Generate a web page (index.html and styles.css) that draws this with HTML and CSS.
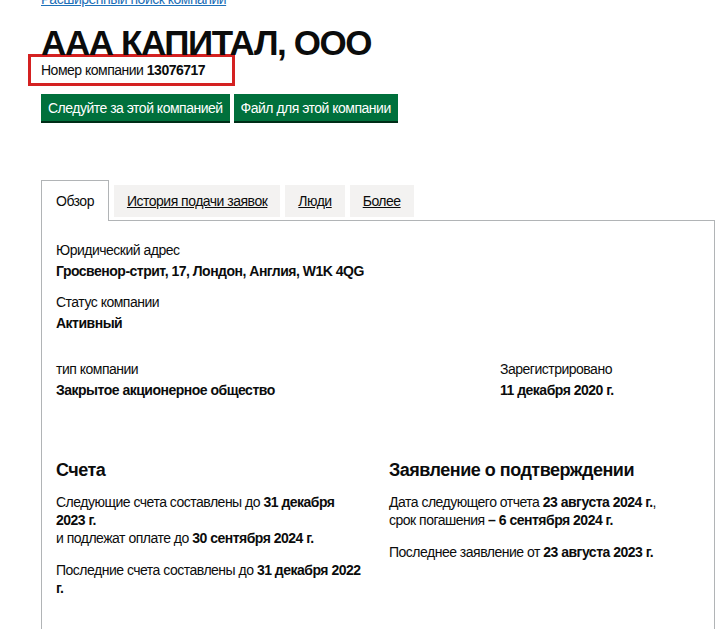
FILE: index.html
```html
<!DOCTYPE html>
<html lang="ru">
<head>
<meta charset="utf-8">
<title>ААА КАПИТАЛ, ООО</title>
<link rel="stylesheet" href="styles.css">
</head>
<body>
<div class="page">
  <a class="back-link" href="#">Расширенный поиск компании</a>
  <h1 class="title">ААА КАПИТАЛ, ООО</h1>
  <div class="highlight">
    <p class="company-number">Номер компании <strong>13076717</strong></p>
  </div>
  <div class="actions">
    <a class="button" href="#">Следуйте за этой компанией</a>
    <a class="button" href="#">Файл для этой компании</a>
  </div>

  <div class="tabs">
    <ul class="tab-list">
      <li class="tab tab-active">Обзор</li>
      <li class="tab"><a href="#">История подачи заявок</a></li>
      <li class="tab"><a href="#">Люди</a></li>
      <li class="tab"><a href="#">Более</a></li>
    </ul>
    <div class="panel">
      <dl class="field">
        <dt>Юридический адрес</dt>
        <dd>Гросвенор-стрит, 17, Лондон, Англия, W1K 4QG</dd>
      </dl>
      <dl class="field">
        <dt>Статус компании</dt>
        <dd>Активный</dd>
      </dl>
      <div class="row-type">
        <dl class="field">
          <dt>тип компании</dt>
          <dd>Закрытое акционерное общество</dd>
        </dl>
        <dl class="field">
          <dt>Зарегистрировано</dt>
          <dd>11 декабря 2020 г.</dd>
        </dl>
      </div>
      <div class="row-halves">
        <div class="col">
          <h2 class="heading">Счета</h2>
          <p class="body">Следующие счета составлены до <strong>31 декабря 2023 г.</strong><br>и подлежат оплате до <strong>30 сентября 2024 г.</strong></p>
          <p class="body">Последние счета составлены до <strong>31 декабря 2022 г.</strong></p>
        </div>
        <div class="col">
          <h2 class="heading">Заявление о подтверждении</h2>
          <p class="body">Дата следующего отчета <strong>23 августа 2024 г.</strong>,<br>срок погашения <strong>– 6 сентября 2024 г.</strong></p>
          <p class="body">Последнее заявление от <strong>23 августа 2023 г.</strong></p>
        </div>
      </div>
    </div>
  </div>
</div>
</body>
</html>
```

FILE: styles.css
```css
html, body {
  margin: 0;
  padding: 0;
  background: #ffffff;
}

body {
  font-family: "Liberation Sans", Arial, sans-serif;
  color: #0b0c0c;
  font-size: 14px;
  letter-spacing: -0.5px;
}

.page {
  padding: 0 7px 0 41px;
}

.back-link {
  display: block;
  width: fit-content;
  margin-top: -10px;
  font-size: 14px;
  line-height: 18px;
  color: #1d70b8;
  text-decoration: underline;
}

.title {
  margin: 17px 0 0;
  font-size: 35px;
  line-height: 36px;
  font-weight: 700;
  letter-spacing: -1.4px;
}

.highlight {
  width: fit-content;
  margin: -7px 0 0 -13px;
  padding: 3px 27px 3px 10px;
  border: 3px solid #d42121;
}

.company-number {
  margin: 0;
  font-size: 14px;
  line-height: 20px;
}

.actions {
  display: flex;
  gap: 4px;
  margin-top: 8px;
}

.button {
  display: block;
  background: #00703c;
  color: #ffffff;
  text-decoration: none;
  font-size: 14px;
  line-height: 18px;
  padding: 5px 7px 4px;
  box-shadow: 0 2px 0 #002d18;
}

.tabs {
  margin-top: 59px;
}

.tab-list {
  list-style: none;
  margin: 0 0 -1px;
  padding: 0;
  display: flex;
  align-items: flex-end;
  gap: 5px;
}

.tab {
  background: #f3f2f1;
  height: 32px;
  line-height: 32px;
  padding: 0 13px;
  margin-bottom: 4px;
  font-size: 14px;
}

.tab a {
  color: #0b0c0c;
  text-decoration: underline;
}

.tab-active {
  position: relative;
  z-index: 1;
  background: #ffffff;
  height: 40px;
  line-height: 40px;
  margin-bottom: 0;
  padding: 0 14px;
  border: 1px solid #b1b4b6;
  border-bottom: none;
}

.panel {
  border: 1px solid #b1b4b6;
  padding: 19px 22px 40px 14px;
  min-height: 420px;
}

.field {
  margin: 0 0 11px;
}

.field dt {
  line-height: 20px;
}

.field dd {
  margin: 1px 0 0;
  font-weight: 700;
  line-height: 20px;
}

.row-type {
  display: grid;
  grid-template-columns: 444px 1fr;
  margin-top: 26px;
}

.row-halves {
  display: grid;
  grid-template-columns: 333px 1fr;
  margin-top: 47px;
}

.col {
  padding-right: 24px;
}

.heading {
  margin: 0 0 11px;
  font-size: 18px;
  line-height: 24px;
  font-weight: 700;
}

.body {
  margin: 0 0 14px;
  line-height: 18px;
}
```
